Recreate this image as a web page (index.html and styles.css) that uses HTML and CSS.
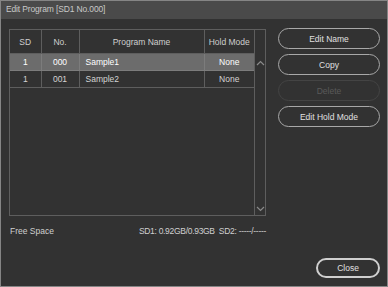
FILE: index.html
```html
<!DOCTYPE html>
<html lang="en">
<head>
  <meta charset="UTF-8" />
  <title>Edit Program</title>
  <link rel="stylesheet" href="styles.css">
</head>
<body>
  <div class="window">
    <div class="titlebar">Edit Program [SD1 No.000]</div>

    <div class="content">
      <div class="main">
        <div class="listbox">
          <div class="list">
            <table class="programs">
              <colgroup>
                <col class="c-sd">
                <col class="c-no">
                <col class="c-name">
                <col class="c-hold">
              </colgroup>
              <thead>
                <tr>
                  <th>SD</th>
                  <th>No.</th>
                  <th>Program Name</th>
                  <th>Hold Mode</th>
                </tr>
              </thead>
              <tbody>
                <tr class="selected">
                  <td class="center">1</td>
                  <td class="center">000</td>
                  <td>Sample1</td>
                  <td class="center">None</td>
                </tr>
                <tr>
                  <td class="center">1</td>
                  <td class="center">001</td>
                  <td>Sample2</td>
                  <td class="center">None</td>
                </tr>
              </tbody>
            </table>
          </div>
          <div class="scrollbar">
            <svg class="arrow up" width="9" height="6" viewBox="0 0 9 6"><path d="M1 5 L4.5 1.5 L8 5" fill="none" stroke="#8a8a8a" stroke-width="1.2"/></svg>
            <svg class="arrow down" width="9" height="6" viewBox="0 0 9 6"><path d="M1 1 L4.5 4.5 L8 1" fill="none" stroke="#8a8a8a" stroke-width="1.2"/></svg>
          </div>
        </div>

        <div class="actions">
          <button class="btn">Edit Name</button>
          <button class="btn">Copy</button>
          <button class="btn" disabled>Delete</button>
          <button class="btn">Edit Hold Mode</button>
        </div>
      </div>

      <div class="footer">
        <span>Free Space</span>
        <span class="space">SD1: 0.92GB/0.93GB&nbsp;&nbsp;SD2: -----/-----</span>
      </div>

      <div class="bottom">
        <button class="btn close">Close</button>
      </div>
    </div>
  </div>
</body>
</html>
```

FILE: styles.css
```css
body {
  margin: 0;
  font-family: 'Liberation Sans', Arial, sans-serif;
  font-size: 8.5px;
  color: #d8d8d8;
  background: #323232;
}

.window {
  width: 388px;
  height: 287px;
  box-sizing: border-box;
  border: 1px solid #858585;
  background: #323232;
  display: flex;
  flex-direction: column;
}

.titlebar {
  height: 18px;
  line-height: 17px;
  padding-left: 5px;
  background: #4a4a4a;
  color: #c8c8c8;
  letter-spacing: -0.15px;
}

.content {
  flex: 1;
  display: flex;
  flex-direction: column;
  padding: 9px 7px 8px 8px;
}

.main {
  display: flex;
  gap: 12px;
  align-items: flex-start;
}

.listbox {
  width: 257px;
  height: 187px;
  box-sizing: border-box;
  margin-top: 1px;
  border: 1px solid #5e5e5e;
  display: flex;
}

.list {
  flex: 1;
}

.programs {
  width: 244px;
  border-collapse: collapse;
  table-layout: fixed;
}

.c-sd { width: 31px; }
.c-no { width: 38px; }
.c-name { width: 125px; }
.c-hold { width: 50px; }

.programs th,
.programs td {
  padding: 0 0 0 6px;
  border-right: 1px solid #5e5e5e;
  border-bottom: 1px solid #5e5e5e;
  white-space: nowrap;
  overflow: hidden;
}

.programs th:last-child,
.programs td:last-child {
  border-right: none;
}

.programs th {
  height: 23px;
  font-weight: normal;
  color: #cfcfcf;
  text-align: center;
  padding: 0;
}

.programs td {
  height: 16px;
  color: #d4d4d4;
}

.programs td.center {
  text-align: center;
  padding: 0;
}

.programs tr.selected td {
  background: #6c6c6c;
  color: #ffffff;
  border-bottom-color: #7c7c7c;
  border-right-color: #7c7c7c;
}

.scrollbar {
  width: 10px;
  border-left: 1px solid #5e5e5e;
  display: flex;
  flex-direction: column;
  justify-content: space-between;
  align-items: center;
  padding: 30px 0 3px;
}

.actions {
  width: 102px;
  display: flex;
  flex-direction: column;
  gap: 5px;
}

.btn {
  height: 21px;
  box-sizing: border-box;
  border: 1px solid #a8a8a8;
  border-radius: 11px;
  background: #323232;
  color: #e0e0e0;
  font-family: inherit;
  font-size: 8.5px;
  padding: 0;
}

.btn:disabled {
  border-color: #444;
  color: #5a5a5a;
}

.footer {
  width: 256px;
  margin-top: 10px;
  padding-left: 1px;
  display: flex;
  justify-content: space-between;
  color: #d0d0d0;
}

.space {
  letter-spacing: -0.3px;
}

.bottom {
  margin-top: auto;
  display: flex;
  justify-content: flex-end;
}

.close {
  width: 64px;
  height: 20px;
  border: 2px solid #cfcfcf;
  border-radius: 10px;
}
```
